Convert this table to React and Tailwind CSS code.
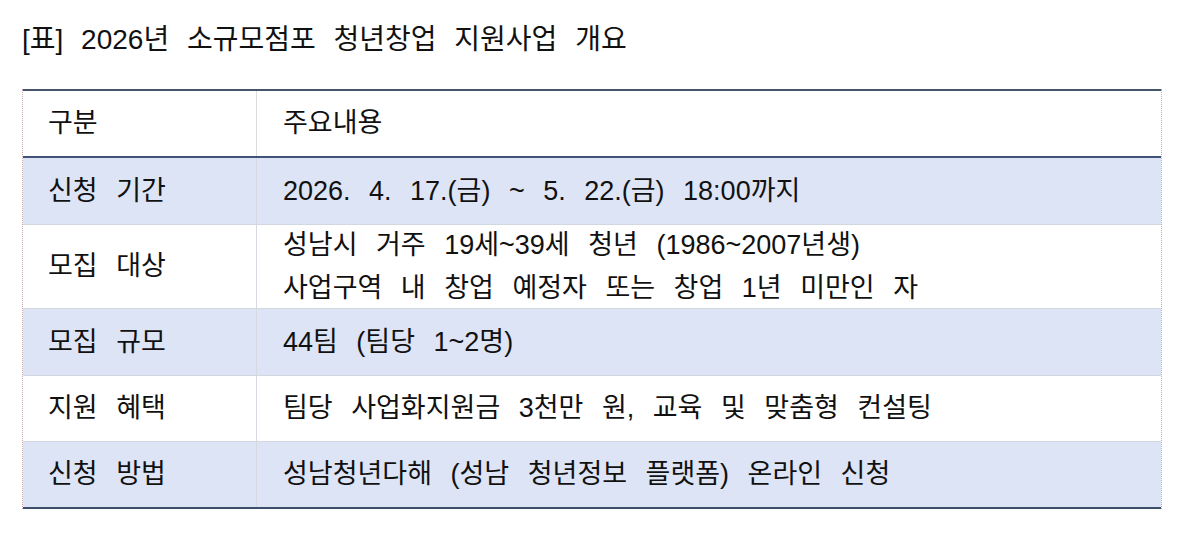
import React from "react";

const rows = [
  { label: "신청 기간", lines: ["2026. 4. 17.(금) ~ 5. 22.(금) 18:00까지"], h: "h-[67px]", blue: true },
  { label: "모집 대상", lines: ["성남시 거주 19세~39세 청년 (1986~2007년생)", "사업구역 내 창업 예정자 또는 창업 1년 미만인 자"], h: "h-[84px]", blue: false },
  { label: "모집 규모", lines: ["44팀 (팀당 1~2명)"], h: "h-[67px]", blue: true },
  { label: "지원 혜택", lines: ["팀당 사업화지원금 3천만 원, 교육 및 맞춤형 컨설팅"], h: "h-[66px]", blue: false },
  { label: "신청 방법", lines: ["성남청년다해 (성남 청년정보 플랫폼) 온라인 신청"], h: "h-[67px]", blue: true, last: true },
];

export default function App() {
  return (
    <div className="w-[1186px] h-[538px] bg-white text-[#111] font-['Liberation_Sans','Noto_Sans_CJK_KR',sans-serif] text-[27px] [word-spacing:11px]">
      <div className="pt-[21px] pl-[22px] h-[58px] leading-[38px] text-[28px] [word-spacing:10px]">[표] 2026년 소규모점포 청년창업 지원사업 개요</div>
      <div className="mt-[31px] ml-[22px] w-[1140px] border-x border-dotted border-x-[#c9a3a8]">
        <div className="border-t-2 border-t-[#44546a] flex flex-col">
          <div className="flex h-[67px] border-b-2 border-b-[#3f5379]">
            <div className="w-[234px] border-r border-r-[#dcdcdc] flex items-center pl-[25px]">구분</div>
            <div className="flex-1 flex items-center pl-[26px]">주요내용</div>
          </div>
          {rows.map((r, i) => (
            <div
              key={i}
              className={`flex ${r.h} ${r.blue ? "bg-[#dde4f5]" : "bg-white"} ${r.last ? "border-b-2 border-b-[#3b4e6b]" : "border-b border-b-[#d3d7e0]"}`}
            >
              <div className="w-[234px] border-r border-r-[#d6d9e0] flex items-center pl-[25px]">{r.label}</div>
              <div className="flex-1 flex flex-col justify-center pl-[26px] leading-[43px]">
                {r.lines.map((l, j) => (
                  <div key={j}>{l}</div>
                ))}
              </div>
            </div>
          ))}
        </div>
      </div>
    </div>
  );
}
